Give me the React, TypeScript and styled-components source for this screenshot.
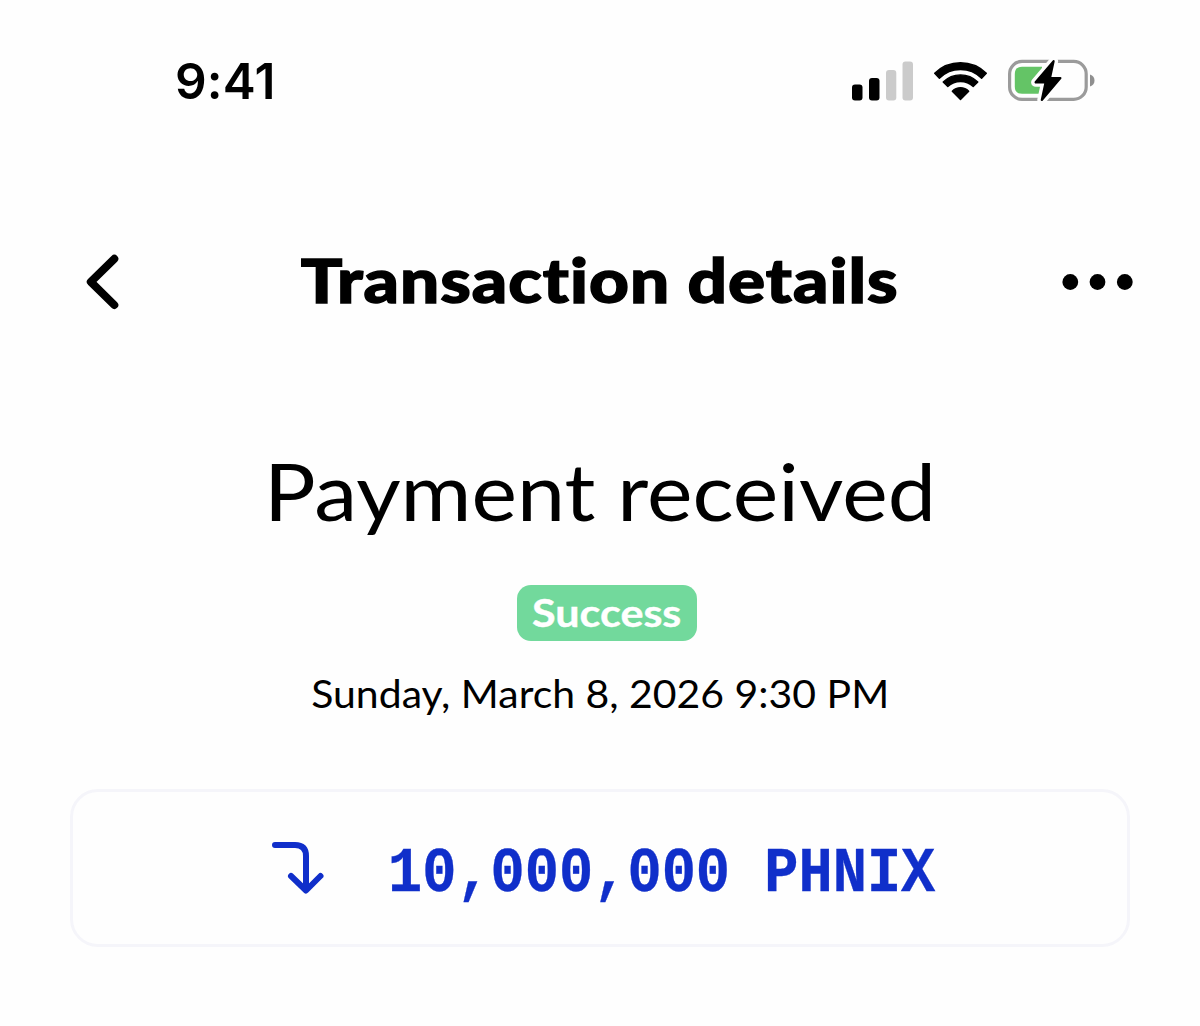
import styled, { createGlobalStyle } from 'styled-components';

const GlobalStyle = createGlobalStyle`
  * {
    box-sizing: border-box;
  }

  body {
    margin: 0;
    background: #fefefe;
    color: #000;
    font-family: Lato, "Open Sans", sans-serif;
    font-variant-ligatures: none;
  }
`;

const Screen = styled.div`
  display: flex;
  flex-direction: column;
  width: 1200px;
  height: 1026px;
  overflow: hidden;
`;

const StatusBar = styled.header`
  display: flex;
  align-items: center;
  justify-content: space-between;
  height: 162px;
  padding: 0 103px 0 175px;
`;

const Clock = styled.time`
  font-family: Inter, sans-serif;
  font-size: 49.5px;
  font-weight: 600;
  line-height: 60px;
  letter-spacing: 0.2px;
`;

const StatusIcons = styled.div`
  display: flex;
  align-items: center;
  gap: 20px;
  margin-bottom: 1px;
`;

const NavBar = styled.nav`
  display: flex;
  align-items: center;
  justify-content: space-between;
  height: 120px;
  margin-top: 60px;
  padding: 0 66px 0 86px;
`;

const IconButton = styled.button<{ $width: number }>`
  display: flex;
  width: ${({ $width }) => $width}px;
  padding: 0;
  border: 0;
  background: none;
`;

type TypeStyledText = {
  $size: number;
  $weight?: number;
  $stretch?: number;
};

const NavTitle = styled.h1<TypeStyledText>`
  margin: 0 0 7px;
  font-size: ${({ $size }) => $size}px;
  font-weight: ${({ $weight }) => $weight};
  line-height: 80px;
  letter-spacing: 0.9px;
  white-space: nowrap;
  -webkit-text-stroke: 1.4px #000;
  transform: scaleX(${({ $stretch }) => $stretch});
`;

const Summary = styled.section`
  display: flex;
  flex-direction: column;
  align-items: center;
  margin-top: 98px;
`;

const Heading = styled.h2<TypeStyledText>`
  margin: 0;
  font-size: ${({ $size }) => $size}px;
  font-weight: ${({ $weight }) => $weight};
  line-height: 100px;
  white-space: nowrap;
  transform: scaleX(${({ $stretch }) => $stretch});
`;

const Badge = styled.div`
  display: flex;
  align-items: center;
  justify-content: center;
  width: 180px;
  height: 56px;
  margin: 45px 0 0 14px;
  border-radius: 14px;
  background: #72d99c;
  color: #fff;
`;

const BadgeLabel = styled.span<TypeStyledText>`
  margin-bottom: 2px;
  font-size: ${({ $size }) => $size}px;
  font-weight: ${({ $weight }) => $weight};
  line-height: 53px;
  -webkit-text-stroke: 0.4px #fff;
  transform: scaleX(${({ $stretch }) => $stretch});
`;

const DateText = styled.p<TypeStyledText>`
  margin: 22px 0 0;
  font-size: ${({ $size }) => $size}px;
  line-height: 60px;
  white-space: nowrap;
  transform: scaleX(${({ $stretch }) => $stretch});
`;

const AmountCard = styled.section`
  display: flex;
  align-items: center;
  height: 158px;
  margin: 66px 70px 0;
  padding-left: 199px;
  border: 3px solid #f5f5fa;
  border-radius: 28px;
  color: #102fca;
`;

const Amount = styled.strong`
  margin: 12px 0 0 62px;
  font-family: "Liberation Mono", monospace;
  font-size: 57px;
  font-weight: 700;
  line-height: 70px;
  white-space: pre;
  -webkit-text-stroke: 0.3px currentColor;
  transform: scaleY(1.12);
`;

const Signal = () => (
  <svg width="62" height="40" viewBox="0 0 62 40">
    <rect x="0" y="23.5" width="10.5" height="16" rx="3" />
    <rect x="17" y="17" width="10.5" height="22.5" rx="3" />
    <rect x="34" y="9" width="10.3" height="30.5" rx="3" fill="#cbcbcb" />
    <rect x="50.5" y="0.5" width="10.5" height="39" rx="3" fill="#cbcbcb" />
  </svg>
);

const Wifi = () => (
  <svg width="54" height="40" viewBox="0.5 0 54 40" stroke="#000" strokeWidth="1.4" strokeLinejoin="round">
    <path d="M1.2 12.3A37 37 0 0 1 52.8 12.3L48.1 17.2A30 30 0 0 0 5.9 17.2Z" />
    <path d="M9.7 21A24.6 24.6 0 0 1 44.3 21L39.7 25.6A18.2 18.2 0 0 0 14.3 25.6Z" />
    <path d="M18.8 30.2A11.6 11.6 0 0 1 35.2 30.2L27 38.4Z" />
  </svg>
);

const Battery = () => (
  <svg width="89" height="43" viewBox="0 0 89 43">
    <rect x="1.6" y="2.4" width="76.6" height="38" rx="12.5" fill="none" stroke="#9b9b9b" strokeWidth="3.2" />
    <path d="M82 15.5C88 17 88 26 82 27.5Z" fill="#8f8f8f" />
    <path d="M14 7.8H34V34.8H14Q6.8 34.8 6.8 27.6V15Q6.8 7.8 14 7.8Z" fill="#64c466" />
    <path
      d="M45.6 2.2L27.6 23.3H37.6L33.8 41L52.4 19H42Z"
      fill="none" stroke="#fefefe" strokeWidth="9" strokeLinejoin="round"
    />
    <path
      d="M45.6 2.2L27.6 23.3H37.6L33.8 41L52.4 19H42Z"
      stroke="#000" strokeWidth="2.2" strokeLinejoin="round"
    />
  </svg>
);

const BackIcon = () => (
  <svg width="34" height="56" viewBox="0 0 34 56" fill="none" stroke="#000" strokeWidth="8" strokeLinecap="round" strokeLinejoin="round">
    <path d="M28.3 4.8L4.8 27.8L28.3 51" />
  </svg>
);

const MoreIcon = () => (
  <svg width="72" height="18" viewBox="0 0 72 18">
    {[8.3, 35.5, 62.8].map((cx) => <circle key={cx} cx={cx} cy="9" r="7.9" />)}
  </svg>
);

const ReceivedIcon = () => (
  <svg width="54" height="54" viewBox="0 0 54 54" fill="none" stroke="currentColor" strokeWidth="6" strokeLinecap="round" strokeLinejoin="round">
    <path d="M3 4H23Q34 4 34 15V49M19 35L34 49.5L48.5 35" />
  </svg>
);

export default function App() {
  return (
    <Screen>
      <GlobalStyle />
      <StatusBar>
        <Clock>9:41</Clock>
        <StatusIcons>
          <Signal />
          <Wifi />
          <Battery />
        </StatusIcons>
      </StatusBar>

      <NavBar>
        <IconButton $width={52} aria-label="Back"><BackIcon /></IconButton>
        <NavTitle $size={61.5} $weight={900} $stretch={1.125}>Transaction details</NavTitle>
        <IconButton $width={72} aria-label="More"><MoreIcon /></IconButton>
      </NavBar>

      <Summary>
        <Heading $size={80} $weight={400} $stretch={1.077}>Payment received</Heading>
        <Badge>
          <BadgeLabel $size={38.5} $weight={700} $stretch={1.12}>Success</BadgeLabel>
        </Badge>
        <DateText $size={39} $stretch={1.05}>Sunday, March 8, 2026 9:30 PM</DateText>
      </Summary>

      <AmountCard>
        <ReceivedIcon />
        <Amount>10,000,000 PHNIX</Amount>
      </AmountCard>
    </Screen>
  );
}
